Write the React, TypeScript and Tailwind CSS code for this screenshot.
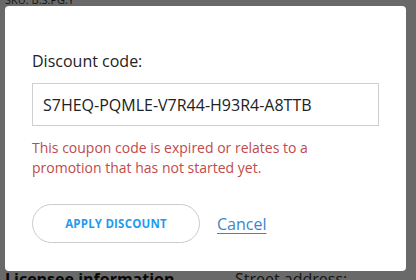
import React from "react";

export default function App() {
  return (
    <div
      className="relative w-[416px] h-[280px] overflow-hidden bg-white"
      style={{ fontFamily: '"Open Sans", "Liberation Sans", sans-serif' }}
    >
      {/* background page */}
      <div className="flex h-full flex-col justify-between px-[5px]">
        <div className="-mt-[7px] text-[11px] leading-[14px] text-[#333]">SKU: B.S.PG.Y</div>
        <div className="flex items-start -mb-[10px]">
          <div className="w-[230px] text-[16px] font-bold leading-[22px] text-[#111]">Licensee information</div>
          <div className="text-[16px] leading-[22px] text-[#333]">Street address:</div>
        </div>
      </div>
      <div className="absolute inset-0 bg-[rgba(0,0,0,0.59)]" />

      {/* dialog */}
      <div className="absolute left-[5px] top-[6px] flex h-[265px] w-[401px] flex-col rounded-[4px] bg-white px-[27px] pt-[45px]">
        <label className="text-[16px] leading-[21px] text-[#222]">Discount code:</label>
        <div className="mt-[11px] flex h-[43px] w-[347px] items-center border border-[#cfcfcf] pl-[10px] text-[16px] text-[#222]">
          S7HEQ-PQMLE-V7R44-H93R4-A8TTB
        </div>
        <p className="mt-[12px] text-[14px] leading-[20px] text-[#c24a4a]">
          This coupon code is expired or relates to a promotion that has not started yet.
        </p>
        <div className="mt-[26px] flex items-center">
          <button className="flex h-[39px] w-[168px] items-center justify-center rounded-full border border-[#cccccc] bg-white text-[11.5px] font-bold tracking-[0.2px] text-[#1f9cf0]">
            APPLY DISCOUNT
          </button>
          <a className="ml-[17px] text-[16px] text-[#3a86cc] underline underline-offset-[3px]">Cancel</a>
        </div>
      </div>
    </div>
  );
}
